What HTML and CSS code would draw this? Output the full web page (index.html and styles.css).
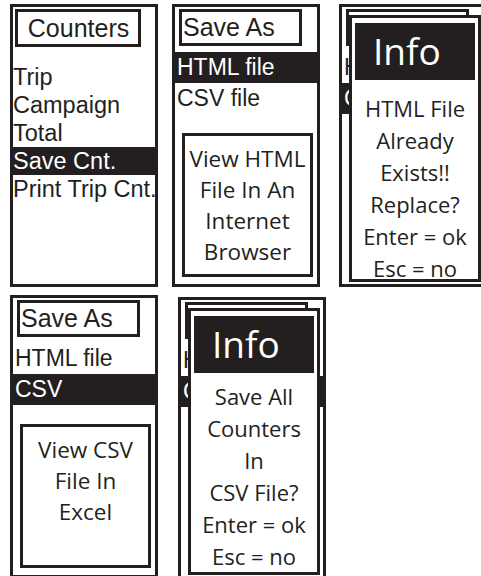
FILE: index.html
```html
<!DOCTYPE html>
<html lang="en">
<head>
  <meta charset="UTF-8">
  <meta name="viewport" content="width=device-width, initial-scale=1">
  <title>Counters - Save Screens</title>
  <link rel="stylesheet" href="styles.css">
</head>
<body>
  <div class="board">
    <div class="row">
      <section class="screen">
        <div class="title title--center">Counters</div>
        <ul class="menu menu--counters">
          <li>Trip</li>
          <li>Campaign</li>
          <li>Total</li>
          <li class="selected">Save Cnt.</li>
          <li>Print Trip Cnt.</li>
        </ul>
      </section>

      <section class="screen">
        <div class="title">Save As</div>
        <ul class="menu">
          <li class="selected">HTML file</li>
          <li>CSV file</li>
        </ul>
        <div class="hint">View HTML<br>File In An<br>Internet<br>Browser</div>
      </section>

      <section class="screen screen--dialog">
        <div class="title">Save As</div>
        <ul class="menu">
          <li>HTML file</li>
          <li class="selected">CSV file</li>
        </ul>
        <div class="dialog">
          <div class="dialog-head">Info</div>
          <p class="dialog-text dialog-text--wide">HTML File<br>Already<br>Exists!!<br>Replace?<br>Enter = ok<br>Esc = no</p>
        </div>
      </section>
    </div>

    <div class="row row--second">
      <section class="screen">
        <div class="title">Save As</div>
        <ul class="menu">
          <li>HTML file</li>
          <li class="selected">CSV</li>
        </ul>
        <div class="hint">View CSV<br>File In<br>Excel</div>
      </section>

      <section class="screen screen--dialog">
        <div class="title">Save As</div>
        <ul class="menu">
          <li>HTML file</li>
          <li class="selected">CSV</li>
        </ul>
        <div class="dialog">
          <div class="dialog-head">Info</div>
          <p class="dialog-text">Save All<br>Counters<br>In<br>CSV File?<br>Enter = ok<br>Esc = no</p>
        </div>
      </section>
    </div>
  </div>
</body>
</html>
```

FILE: styles.css
```css
html, body {
  margin: 0;
  padding: 0;
  overflow: hidden;
  background: #ffffff;
  color: #231f20;
  font-family: 'Liberation Sans', Arial, sans-serif;
}
.board {
  width: 481px;
  height: 576px;
  padding-top: 4px;
  box-sizing: border-box;
}
.row {
  display: flex;
  gap: 14px;
  padding-left: 10px;
}
.row--second {
  margin-top: 8px;
}
.screen {
  position: relative;
  flex: none;
  width: 148px;
  height: 283px;
  box-sizing: border-box;
  border: 3px solid #231f20;
  background: #ffffff;
  overflow: hidden;
}
.screen--dialog {
  margin-left: 5px;
}
.row--second .screen--dialog {
  margin-left: 6px;
  margin-top: 2px;
}
.title {
  margin: 2px 0 0 4px;
  width: 123px;
  height: 37px;
  box-sizing: border-box;
  border: 3px solid #231f20;
  padding-left: 1px;
  font-size: 25px;
  line-height: 31px;
  white-space: nowrap;
}
.title--center {
  margin-left: 2px;
  width: 126px;
  height: 38px;
  line-height: 32px;
  text-align: center;
}
.menu {
  list-style: none;
  margin: 6px 0 0;
  padding: 0;
  font-size: 23px;
  line-height: 31px;
  white-space: nowrap;
}
.menu li {
  padding-left: 2px;
}
.menu--counters {
  margin-top: 16px;
  font-size: 23.5px;
  line-height: 28px;
}
.menu--counters li {
  padding-left: 0;
}
.menu .selected {
  background: #231f20;
  color: #ffffff;
}
.hint {
  margin: 19px 0 0 7px;
  width: 131px;
  height: 144px;
  box-sizing: border-box;
  border: 3px solid #231f20;
  padding-top: 7px;
  font-family: 'Open Sans', sans-serif;
  font-size: 22.5px;
  line-height: 31px;
  text-align: center;
  white-space: nowrap;
}
.dialog {
  position: absolute;
  left: 7px;
  top: 8px;
  width: 132px;
  height: 267px;
  box-sizing: border-box;
  border: 3px solid #231f20;
  background: #ffffff;
  font-family: 'Open Sans', sans-serif;
}
.dialog-head {
  margin: 5px 3px 0;
  height: 57px;
  padding-left: 18px;
  background: #231f20;
  color: #ffffff;
  font-size: 37px;
  line-height: 55px;
}
.dialog-text {
  margin: 7px 0 0;
  font-size: 22px;
  line-height: 32px;
  text-align: center;
  white-space: nowrap;
}
.dialog-text--wide {
  margin-top: 12px;
}
```
